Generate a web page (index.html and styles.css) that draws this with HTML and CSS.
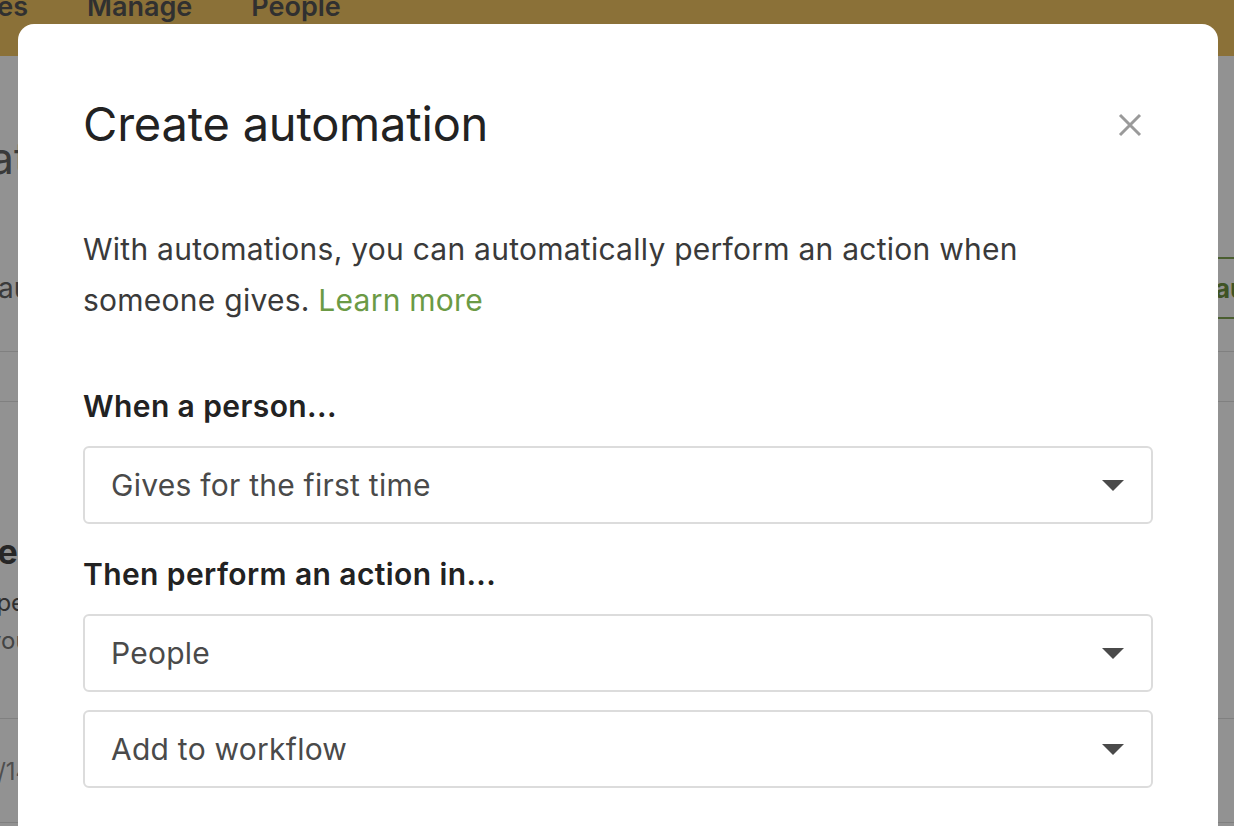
FILE: index.html
```html
<!DOCTYPE html>
<html lang="en">
<head>
    <meta charset="UTF-8">
    <meta name="viewport" content="width=device-width, initial-scale=1.0">
    <title>Create automation</title>
    <link rel="stylesheet" href="styles.css">
</head>
<body>
    <div class="page">
        <header class="topnav">
            <span class="nav-item nav-cut"><span>Pages</span></span>
            <span class="nav-item">Manage</span>
            <span class="nav-item">People</span>
        </header>

        <main class="bg-content">
            <div class="bg-heading">Automations</div>

            <div class="bg-toolbar">
                <span class="bg-tab">automations list for this giving page</span>
                <span class="bg-button">Create automation</span>
            </div>

            <div class="bg-table-head"></div>

            <div class="bg-row">
                <div class="bg-row-title">Welcome new givers to the church family</div>
                <div class="bg-row-desc">open people workflow after they give so that your team can follow up with them this week, and after that for</div>
                <div class="bg-row-desc muted">you turn this on it will run for you then new givers will show up in the people workflow for ever and awhile</div>
            </div>

            <div class="bg-row short">
                <div class="bg-row-date">Created 07/14/2021</div>
            </div>
        </main>
    </div>

    <div class="overlay">
        <div class="modal">
            <div class="modal-header">
                <h1 class="modal-title">Create automation</h1>
                <button class="modal-close" aria-label="Close">
                    <svg width="24" height="24" viewBox="0 0 24 24">
                        <path d="M2 2 L22 22 M22 2 L2 22" stroke="#9a9a9a" stroke-width="3" fill="none"/>
                    </svg>
                </button>
            </div>

            <p class="modal-intro">
                With automations, you can automatically perform an action when
                someone gives. <a href="#" class="learn-more">Learn more</a>
            </p>

            <div class="field">
                <label class="field-label">When a person...</label>
                <div class="select-box">
                    <span>Gives for the first time</span>
                    <span class="caret"></span>
                </div>
            </div>

            <div class="field">
                <label class="field-label">Then perform an action in...</label>
                <div class="select-box">
                    <span>People</span>
                    <span class="caret"></span>
                </div>
                <div class="select-box">
                    <span>Add to workflow</span>
                    <span class="caret"></span>
                </div>
            </div>
        </div>
    </div>
</body>
</html>
```

FILE: styles.css
```css
body {
    margin: 0;
    font-family: Inter, "Noto Sans", sans-serif;
    background-color: #fff;
    overflow: hidden;
}

/* background page, dimmed by the overlay */
.page {
    height: 826px;
    overflow: hidden;
}
.topnav {
    height: 56px;
    background-color: #f3c563;
    display: flex;
    align-items: flex-start;
    gap: 59px;
    overflow: hidden;
}
.nav-item {
    font-size: 27px;
    font-weight: 600;
    color: #555;
    line-height: 28px;
    margin-top: -7px;
    white-space: nowrap;
}
.nav-cut {
    width: 28px;
    overflow: hidden;
    display: flex;
    justify-content: flex-end;
}
.bg-content {
    margin-left: -40px;
    margin-right: -40px;
    white-space: nowrap;
}
.bg-heading {
    font-size: 44px;
    color: #666;
    margin-top: 76px;
    margin-left: -106px;
    line-height: 52px;
}
.bg-toolbar {
    margin-top: 73px;
    height: 62px;
    display: flex;
    justify-content: space-between;
    align-items: center;
}
.bg-tab {
    font-size: 28px;
    color: #666;
    margin-left: 38px;
}
.bg-button {
    font-size: 26px;
    font-weight: 700;
    color: #6f9140;
    border-top: 2px solid #82a554;
    border-bottom: 2px solid #82a554;
    height: 58px;
    display: flex;
    align-items: center;
    margin-right: -85px;
}
.bg-table-head {
    margin-top: 32px;
    height: 49px;
    border-top: 1px solid #e0e0e0;
    border-bottom: 1px solid #e0e0e0;
}
.bg-row {
    height: 317px;
    border-bottom: 1px solid #e0e0e0;
    padding-top: 130px;
    box-sizing: border-box;
}
.bg-row.short {
    height: 104px;
    padding-top: 38px;
}
.bg-row-title {
    font-size: 34px;
    font-weight: 700;
    color: #444;
    margin-left: 4px;
    line-height: 40px;
    margin-bottom: 12px;
}
.bg-row-desc {
    font-size: 24px;
    color: #555;
    line-height: 38px;
    margin-left: 22px;
}
.bg-row-desc.muted {
    color: #777;
    margin-left: 28px;
}
.bg-row-date {
    font-size: 24px;
    color: #888;
    margin-left: -88px;
}

/* overlay and modal */
.overlay {
    position: fixed;
    top: 0;
    left: 0;
    right: 0;
    bottom: 0;
    background-color: rgba(0, 0, 0, 0.427);
    padding: 24px 16px 0 18px;
    overflow: hidden;
}
.modal {
    width: 1200px;
    height: 900px;
    background-color: #fff;
    border-radius: 16px;
    padding: 0 65px;
    box-sizing: border-box;
}
.modal-header {
    display: flex;
    justify-content: space-between;
    align-items: center;
    padding-top: 70px;
}
.modal-title {
    margin: 0;
    font-size: 47px;
    font-weight: 400;
    color: #222;
    line-height: 60px;
    letter-spacing: -0.2px;
}
.modal-close {
    background: none;
    border: none;
    padding: 0;
    margin-right: 11px;
    margin-top: 2px;
    cursor: pointer;
    display: flex;
}
.modal-intro {
    margin: 70px 0 0 0;
    max-width: 980px;
    font-size: 30px;
    line-height: 51px;
    color: #3a3a3a;
    letter-spacing: 0.25px;
}
.learn-more {
    color: #6b9a45;
    text-decoration: none;
}
.field {
    margin-top: 62px;
}
.field + .field {
    margin-top: 32px;
}
.field-label {
    display: block;
    font-size: 30px;
    font-weight: 600;
    color: #222;
    line-height: 36px;
    margin-bottom: 22px;
    letter-spacing: 0.4px;
}
.select-box {
    height: 78px;
    border: 2px solid #dcdcdc;
    border-radius: 6px;
    box-sizing: border-box;
    display: flex;
    align-items: center;
    justify-content: space-between;
    padding: 0 27px 0 26px;
    font-size: 30px;
    color: #4a4a4a;
    letter-spacing: 0.25px;
}
.select-box + .select-box {
    margin-top: 18px;
}
.caret {
    width: 0;
    height: 0;
    border-left: 11px solid transparent;
    border-right: 11px solid transparent;
    border-top: 11px solid #4a4a4a;
}
```
